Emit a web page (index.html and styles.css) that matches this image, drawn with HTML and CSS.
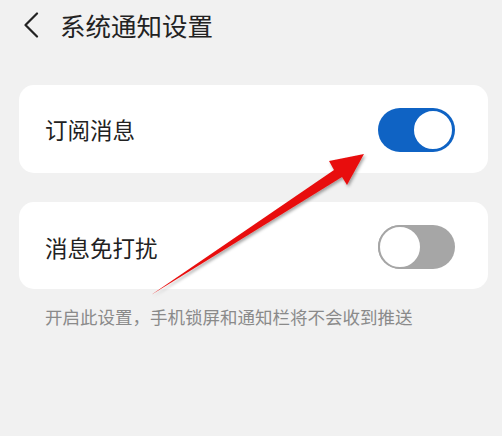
FILE: index.html
```html
<!DOCTYPE html>
<html lang="zh">
<head>
<meta charset="utf-8">
<link rel="stylesheet" href="styles.css">
</head>
<body>
<div class="page">
  <header class="header">
    <svg class="back" width="16" height="26" viewBox="0 0 16 26"><path d="M14 1.5 L2.5 13 L14 24.5" fill="none" stroke="#222" stroke-width="2.2" stroke-linecap="round" stroke-linejoin="round"/></svg>
    <h1 class="title">系统通知设置</h1>
  </header>
  <section class="card card-first">
    <span class="label">订阅消息</span>
    <span class="toggle on"><span class="knob"></span></span>
  </section>
  <section class="card card-second">
    <span class="label">消息免打扰</span>
    <span class="toggle off"><span class="knob"></span></span>
  </section>
  <p class="note">开启此设置，手机锁屏和通知栏将不会收到推送</p>
  <svg class="arrow" width="502" height="436" viewBox="0 0 502 436">
    <defs>
      <filter id="sh" x="-20%" y="-20%" width="140%" height="140%">
        <feDropShadow dx="1.5" dy="2" stdDeviation="1.5" flood-color="#000" flood-opacity="0.35"/>
      </filter>
    </defs>
    <path d="M151 295 L334 170 L329 161 L364 154 L347 185 L342 177 Z" fill="#e8100f" filter="url(#sh)"/>
  </svg>
</div>
</body>
</html>
```
FILE: styles.css
```css
html, body {
  margin: 0;
  padding: 0;
}
body {
  background: #f1f1f1;
  font-family: "Noto Sans CJK SC", "Noto Sans", sans-serif;
  color: #222;
  width: 502px;
  height: 436px;
  overflow: hidden;
}
.page {
  position: relative;
  width: 502px;
  height: 436px;
}
.header {
  display: flex;
  align-items: center;
  height: 49px;
  padding-left: 23px;
}
.back {
  display: block;
  margin-right: 21px;
}
.title {
  margin: 0;
  font-size: 25.5px;
  font-weight: 400;
  line-height: 1;
  color: #222;
}
.card {
  background: #fff;
  border-radius: 15px;
  margin: 0 14px 0 19px;
  display: flex;
  align-items: center;
  justify-content: space-between;
  padding: 0 33px 0 26px;
}
.card-first {
  margin-top: 36px;
  height: 88px;
}
.card-second {
  margin-top: 29px;
  height: 87px;
}
.card-first .toggle { margin-top: 1px; }
.card-second .toggle { margin-bottom: -2px; }
.label {
  font-size: 22.5px;
  line-height: 1;
  color: #222;
}
.card-second .label { margin-top: 4px; }
.toggle {
  position: relative;
  display: block;
  width: 77px;
  height: 44px;
  border-radius: 22px;
  box-sizing: border-box;
}
.toggle .knob {
  position: absolute;
  top: 1px;
  width: 42px;
  height: 42px;
  box-sizing: border-box;
  border-radius: 50%;
  background: #fff;
}
.toggle.on {
  background: #0f63c4;
}
.toggle.on .knob {
  right: 1px;
  border: 2px solid #0f63c4;
}
.toggle.off {
  background: #a6a6a6;
}
.toggle.off .knob {
  left: 0;
  top: 0;
  width: 44px;
  height: 44px;
  border: 2px solid #a6a6a6;
}
.note {
  margin: 16px 0 0 45px;
  font-size: 17.5px;
  line-height: 24px;
  color: #8a8a8a;
}
.arrow {
  position: absolute;
  left: 0;
  top: 0;
  pointer-events: none;
}
```
